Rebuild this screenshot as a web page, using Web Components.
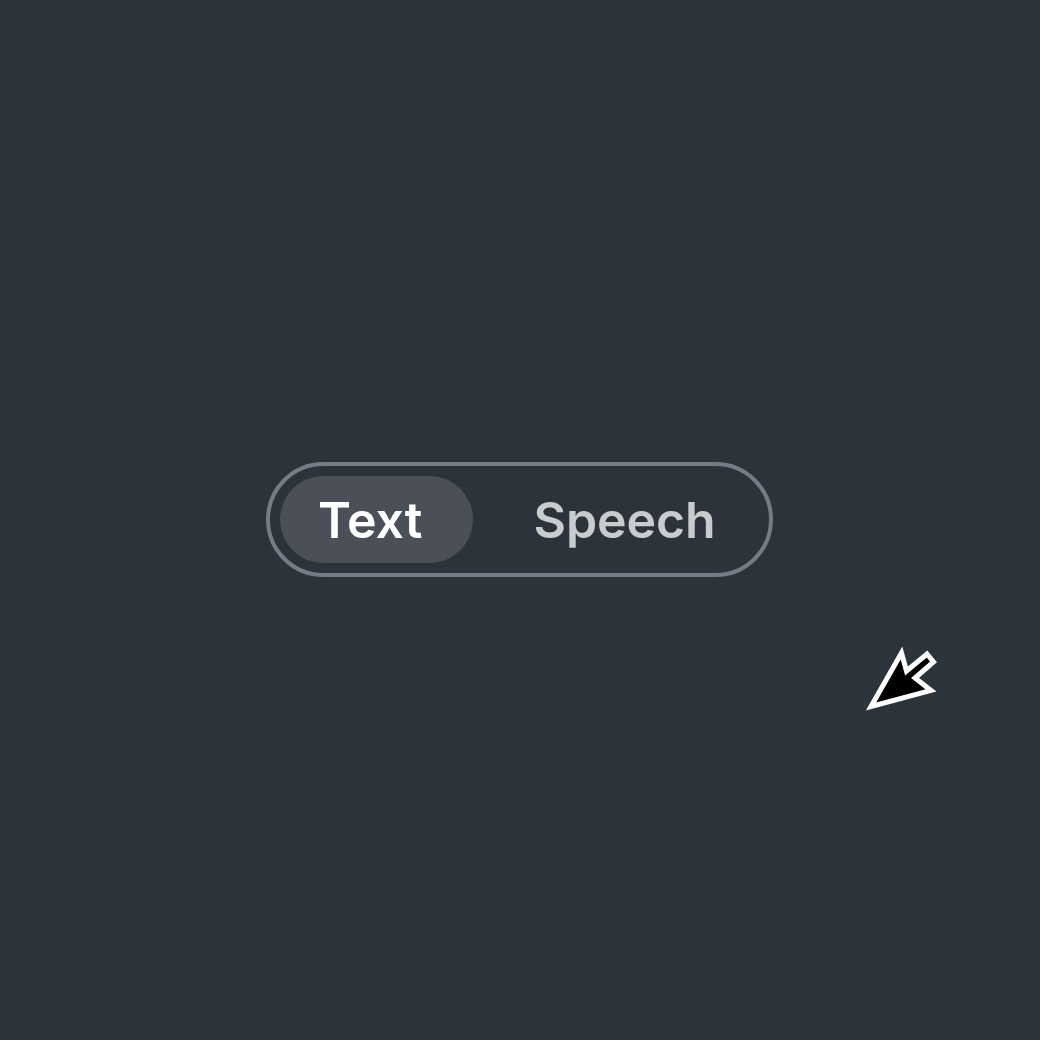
<!DOCTYPE html>
<html>
<head>
<meta charset="utf-8">
<style>
  html, body { margin: 0; height: 100%; background: #2d333a; }
  body { display: flex; align-items: center; justify-content: center; height: 1040px; position: relative; overflow: hidden; }
</style>
</head>
<body>
<mode-toggle>
  <mode-tab active>Text</mode-tab>
  <mode-tab>Speech</mode-tab>
</mode-toggle>
<mouse-cursor></mouse-cursor>
<script>
class ModeToggle extends HTMLElement {
  connectedCallback() {
    this.attachShadow({ mode: 'open' });
    this.shadowRoot.innerHTML = `
      <style>
        :host {
          display: flex;
          gap: 20px;
          box-sizing: border-box;
          width: 507px;
          height: 115px;
          margin-top: -1px;
          margin-left: -1px;
          padding: 10px;
          border: 4px solid #777b85;
          border-radius: 58px;
        }
      </style>
      <slot></slot>
    `;
  }
}
customElements.define('mode-toggle', ModeToggle);

class ModeTab extends HTMLElement {
  connectedCallback() {
    this.attachShadow({ mode: 'open' });
    this.shadowRoot.innerHTML = `
      <style>
        :host {
          display: flex;
          align-items: center;
          height: 87px;
          padding: 0 42px 0 41px;
          border-radius: 44px;
          font: 600 50px "Inter", sans-serif;
          letter-spacing: -0.1px;
          color: #c9cccf;
        }
        :host([active]) {
          background: #4b5058;
          color: #ffffff;
          padding: 0 50px 0 38px;
          letter-spacing: 0;
        }
      </style>
      <slot></slot>
    `;
  }
}
customElements.define('mode-tab', ModeTab);

class MouseCursor extends HTMLElement {
  connectedCallback() {
    this.attachShadow({ mode: 'open' });
    this.shadowRoot.innerHTML = `
      <style>
        :host { position: absolute; left: 860px; top: 640px; width: 85px; height: 75px; }
        svg { display: block; }
      </style>
      <svg width="85" height="75" viewBox="860 640 85 75">
        <polygon points="871,706.5 901.5,653 906.5,671 927,654 933.5,662 915,678 931,690.5"
          fill="#000" stroke="#fff" stroke-width="5" stroke-linejoin="miter" stroke-miterlimit="8"/>
      </svg>
    `;
  }
}
customElements.define('mouse-cursor', MouseCursor);
</script>
</body>
</html>
